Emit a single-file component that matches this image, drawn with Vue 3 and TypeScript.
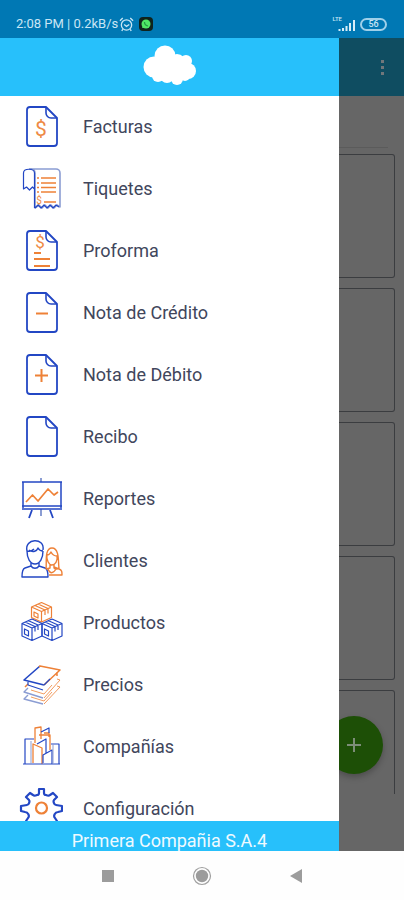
<script setup lang="ts">
type Tone = 'blue' | 'orange' | 'soft'

interface Stroke {
  d: string
  tone: Tone
  width?: number
}

interface Glyph {
  x: number
  y: number
  size: number
}

interface MenuItem {
  label: string
  strokes: Stroke[]
  dollar?: Glyph
}

const sheet: Stroke[] = [
  { d: 'M27 2H11a3 3 0 0 0-3 3v33a3 3 0 0 0 3 3h24a3 3 0 0 0 3-3V13z', tone: 'blue', width: 1.8 },
  { d: 'M27 2v6a5 5 0 0 0 5 5h6', tone: 'blue', width: 1.6 },
]

const items: MenuItem[] = [
  { label: 'Facturas', strokes: sheet, dollar: { x: 22, y: 31, size: 21 } },
  {
    label: 'Tiquetes',
    strokes: [
      { d: 'M10 2H37a4 4 0 0 1 4 4V40l-3-2-3 3-3-3-3 3-3-3-3 3-3-3-4 3V6a4 4 0 0 0-5-4', tone: 'soft', width: 1.6 },
      { d: 'M15.500 41V6c0-5-11-5-11 0v16l3-2 3 3 3-3 2 2M16 41l3-3 3 3 3-3 3 3 3-3 3 3 3-3 3 2', tone: 'blue', width: 1.2 },
      { d: 'M18 11h2M22 11h15M18 16h2M22 16h15M18 20.500h2M22 20.500h15M18 25h2M22 25h15M25 35h12', tone: 'orange', width: 1.4 },
    ],
    dollar: { x: 20, y: 37, size: 10 },
  },
  {
    label: 'Proforma',
    strokes: [...sheet, { d: 'M15 24h7M15 30h16M15 37h16', tone: 'orange', width: 2 }],
    dollar: { x: 21, y: 19, size: 17 },
  },
  { label: 'Nota de Crédito', strokes: [...sheet, { d: 'M17 22.500h12', tone: 'orange', width: 2 }] },
  { label: 'Nota de Débito', strokes: [...sheet, { d: 'M16 22.500h13M22.500 16v13', tone: 'orange', width: 2 }] },
  { label: 'Recibo', strokes: sheet },
  {
    label: 'Reportes',
    strokes: [
      { d: 'M22 1v4M22 32v7', tone: 'soft', width: 2 },
      { d: 'M3 5H43M4 5V31M42 5V31M3 29H43M3 32H43', tone: 'blue', width: 1.5 },
      { d: 'M13 33l-3 8M31 33l3 8', tone: 'blue', width: 1.8 },
      { d: 'M7 25l6.500-7 5.500 6L29 12l6 6 4-3', tone: 'orange', width: 1.7 },
    ],
  },
  {
    label: 'Clientes',
    strokes: [
      { d: 'M8 12c-3-13 18-14 16-1M8 12c0 7 3 13 8 13s8-6 8-13M8 12c3 1 5 0 7-2M10 11c4 3 8 1 9-2 1 2 3 3 5 3', tone: 'blue', width: 1.4 },
      { d: 'M12 24v3l-6 2c-3 1-3 5-3 9h26c0-4 0-8-3-9l-6-2v-3M12 27c2 3 6 3 8 0', tone: 'blue', width: 1.4 },
      { d: 'M27 30c1-5-2-21 6-21s6 16 7 20c-2 2-4 1-5 0v-3M28 15c-1 6 2 11 5 11s6-4 5-9c-3 0-5-2-6-4-1 2-2 3-4 3M31 26v3l-4 1M35 28l5 2c3 1 3 3 3 6H30M29 30c2 5 5 5 8 0', tone: 'orange', width: 1.4 },
    ],
  },
  {
    label: 'Productos',
    strokes: [
      { d: 'M22.500 1.500l10 4.500v10.500l-10 4.500-10-4.500V6zM12.500 6l10 4.500L32.500 6M22.500 10.500V21M16 4.500l10 4.500v5M19 3l10 4.500v5M15 11v4l4 2v-4z', tone: 'orange', width: 1.2 },
      { d: 'M13 18l10 4.500V35l-10 4.500L3 35V22.500zM3 22.500L13 27l10-4.500M13 27v12.500M6 21l10 4.500v5M9 19.500L19 24v5M5.500 28v5l4 2v-5z', tone: 'blue', width: 1.2 },
      { d: 'M33 18l10 4.500V35l-10 4.500L23 35V22.500L33 27l10-4.500M23 22.500L33 18M33 27v12.500M26 21l10 4.500v5M29 19.500L39 24v5M25.500 28v5l4 2v-5z', tone: 'blue', width: 1.2 },
    ],
  },
  {
    label: 'Precios',
    strokes: [
      { d: 'M9 25l-4 4 19 6M9 32l-4 4 19 5', tone: 'soft', width: 1.4 },
      { d: 'M38 16l3 1-16 18M38 23l3 1-16 17M12 27l13 4 8-9M12 34l13 4 8-9', tone: 'orange', width: 0.8 },
      { d: 'M21 3L5 17l20 5', tone: 'blue', width: 1.6 },
      { d: 'M20 4l1-1 20 4-16 15M6 24l3-3M38 9v4', tone: 'orange', width: 1.5 },
      { d: 'M25 22l6-6M9 19v3l15 5', tone: 'blue', width: 1.2 },
    ],
  },
  {
    label: 'Compañías',
    strokes: [
      { d: 'M16 18V3l6-1v12M25 8h5v4M20 10h11v15M14 38V19l9 4v16', tone: 'orange', width: 1.3 },
      { d: 'M4 39h37M6 39V14h9M40 39V19h-8M22 7l8-4v5M18 19l9-5v14M24 38V30l9-5v14', tone: 'blue', width: 1.2 },
      { d: 'M12 39V16M34 39V19', tone: 'soft', width: 1 },
    ],
  },
  {
    label: 'Configuración',
    strokes: [
      {
        d: 'M20 2h5v4c0 1 1 2 2 2 2 1 3 1 4 0l3-2 4 4-3 3c-1 1 0 5 2 5l6 1v5l-4 1c-3 0-5 4-3 6l2 3-4 4-3-2c-2-2-6 0-6 2v4h-5v-4c0-2-4-4-6-2l-3 2-4-4 2-3c2-2 0-6-3-6l-4-1v-5l6-1c2 0 3-4 2-5l-3-3 4-4 3 2c1 1 2 1 4 0 1 0 2-1 2-2z',
        tone: 'blue',
        width: 2.2,
      },
      { d: 'M28 21a5.500 5.500 0 1 1-11 0a5.500 5.500 0 1 1 11 0', tone: 'orange', width: 2.2 },
    ],
  },
]

const cards = [1, 2, 3, 4, 5]
</script>

<template>
  <div class="screen">
    <header class="status">
      <span class="clock">2:08 PM | 0.2kB/s</span>
      <svg class="alarm" viewBox="0 0 16 16" aria-hidden="true">
        <circle cx="8" cy="8.500" r="5.500" />
        <path d="M1 4l3-3M15 4l-3-3M5.500 8L8 10l3-2M4 13l-1 2M12 13l1 2" />
      </svg>
      <svg class="chat" viewBox="0 0 14 14" aria-hidden="true">
        <rect width="14" height="14" rx="4" fill="#10231c" />
        <circle cx="7" cy="7" r="4.500" fill="#50e666" />
        <path d="M3 11l1-3 2 2z" fill="#50e666" />
        <path d="M5.500 5c0 2 1.500 3.500 3.500 4" fill="none" stroke="#239a43" stroke-width="1.200" />
      </svg>
      <span class="spacer"></span>
      <span class="network">LTE</span>
      <svg class="signal" viewBox="0 0 18 12" aria-hidden="true">
        <path d="M1.500 12v-2M5 12V9M8.500 12V7M12 12V4M16 12V1" />
      </svg>
      <span class="battery">56</span>
    </header>

    <div class="body">
      <aside class="drawer">
        <div class="brand">
          <svg class="cloud" viewBox="0 0 54 40" aria-hidden="true">
            <g fill="#fff">
              <circle cx="22" cy="11" r="10.500" />
              <circle cx="11" cy="22" r="10.500" />
              <circle cx="43" cy="16" r="6" />
              <circle cx="45" cy="26" r="8" />
              <circle cx="34" cy="18" r="9" />
              <circle cx="15" cy="31" r="6" />
              <circle cx="24" cy="31" r="7" />
              <circle cx="34" cy="34" r="6" />
              <circle cx="42" cy="31" r="5" />
              <rect x="12" y="14" width="32" height="18" />
            </g>
          </svg>
        </div>
        <nav class="menu">
          <a v-for="item in items" :key="item.label" class="item" href="#">
            <svg class="icon" viewBox="0 0 44 44" aria-hidden="true">
              <path
                v-for="(s, i) in item.strokes"
                :key="i"
                :class="s.tone"
                :d="s.d"
                :stroke-width="s.width ?? 1.5"
              />
              <text
                v-if="item.dollar"
                class="dollar"
                :x="item.dollar.x"
                :y="item.dollar.y"
                :font-size="item.dollar.size"
                text-anchor="middle"
              >$</text>
            </svg>
            <span>{{ item.label }}</span>
          </a>
        </nav>
        <div class="company">Primera Compañia S.A.4</div>
      </aside>

      <main class="page">
        <div class="toolbar">
          <button class="more" type="button" aria-label="Más opciones">
            <i></i><i></i><i></i>
          </button>
        </div>
        <div class="divider"></div>
        <div class="cards">
          <div v-for="card in cards" :key="card" class="card"></div>
        </div>
        <button class="fab" type="button" aria-label="Agregar">
          <svg viewBox="0 0 16 16" aria-hidden="true"><path d="M8 1v14M1 8h14" /></svg>
        </button>
      </main>
    </div>

    <footer class="keys">
      <button type="button" aria-label="Recientes">
        <svg viewBox="0 0 20 20"><rect x="4" y="4" width="12" height="12" fill="#9c9c9c" /></svg>
      </button>
      <button type="button" aria-label="Inicio">
        <svg viewBox="0 0 20 20">
          <circle cx="10" cy="10" r="8.500" fill="none" stroke="#a0a0a0" stroke-width="1.200" />
          <circle cx="10" cy="10" r="6.200" fill="#9c9c9c" />
        </svg>
      </button>
      <button type="button" aria-label="Atrás">
        <svg viewBox="0 0 20 20"><path d="M4 10l12-7v14z" fill="#9c9c9c" /></svg>
      </button>
    </footer>
  </div>
</template>

<style>
body {
  background: #fefefe;
}
</style>

<style scoped>
.screen {
  display: flex;
  flex-direction: column;
  height: 100vh;
  overflow: hidden;
  font-family: Roboto, 'Liberation Sans', sans-serif;
}

button {
  padding: 0;
  border: 0;
  background: none;
  cursor: pointer;
}

.status {
  display: flex;
  flex: none;
  align-items: center;
  height: 28px;
  padding: 10px 17px 0 16px;
  background: #0078b4;
  color: #c9e6f5;
}

.clock {
  font-size: 13px;
  line-height: 16px;
}

.alarm {
  width: 15px;
  height: 15px;
  margin-left: 1px;
  fill: none;
  stroke: #c9e6f5;
  stroke-width: 1.4;
}

.chat {
  width: 14px;
  height: 14px;
  margin-left: 5px;
}

.spacer {
  flex: 1;
}

.network {
  align-self: flex-start;
  margin-top: 5px;
  font-size: 6px;
  font-weight: 500;
  line-height: 8px;
}

.signal {
  width: 18px;
  height: 12px;
  margin: 1px 4px 0 -4px;
  stroke: #d7edf8;
  stroke-width: 2;
}

.battery {
  box-sizing: border-box;
  width: 27px;
  height: 13px;
  border: 2px solid #9fd0e9;
  border-radius: 7px;
  font-size: 9px;
  font-weight: 500;
  line-height: 9px;
  text-align: center;
}

.body {
  display: grid;
  flex: 1;
  grid-template-columns: minmax(0, 1fr) 65px;
  grid-template-rows: minmax(0, 1fr);
  min-height: 0;
}

.drawer {
  display: flex;
  flex-direction: column;
  min-height: 0;
  background: #fff;
}

.brand {
  display: flex;
  flex: none;
  align-items: center;
  justify-content: center;
  height: 54px;
  padding-bottom: 4px;
  background: #27c0fb;
}

.cloud {
  width: 54px;
  height: 40px;
}

.menu {
  flex: 1;
  min-height: 0;
  overflow: hidden;
}

.item {
  display: flex;
  align-items: center;
  gap: 20px;
  height: 62px;
  padding-left: 19px;
  color: #41465c;
  font-size: 18px;
  line-height: 24px;
  text-decoration: none;
}

.icon {
  flex: none;
  width: 44px;
  height: 44px;
  fill: none;
  stroke-linejoin: round;
}

.blue {
  stroke: #2347c4;
}

.orange {
  stroke: #ee8137;
}

.soft {
  stroke: #8b9dd3;
}

.dollar {
  fill: #ee8a45;
}

.company {
  flex: none;
  height: 30px;
  padding-top: 8px;
  box-sizing: border-box;
  overflow: hidden;
  background: #27c0fb;
  color: #effaff;
  font-size: 18px;
  line-height: 24px;
  text-align: center;
}

.page {
  position: relative;
  display: flex;
  flex-direction: column;
  min-height: 0;
  overflow: hidden;
  background: #666;
}

.toolbar {
  display: flex;
  flex: none;
  align-items: center;
  justify-content: flex-end;
  height: 58px;
  padding-right: 16px;
  background: #0f4d61;
}

.more {
  display: flex;
  flex-direction: column;
  align-items: center;
  gap: 3px;
  width: 12px;
}

.more i {
  width: 3px;
  height: 3px;
  background: #71777b;
}

.divider {
  flex: none;
  height: 1px;
  margin: 51px 16px 6px 0;
  background: #5b5b5b;
}

.cards {
  display: flex;
  flex: 1;
  flex-direction: column;
  gap: 10px;
  min-height: 0;
  margin-bottom: 57px;
  overflow: hidden;
}

.card {
  box-sizing: border-box;
  flex: none;
  height: 124px;
  margin-right: 9px;
  border: 1px solid #3b3d40;
  border-left: 0;
  border-radius: 0 3px 3px 0;
}

.fab {
  position: absolute;
  right: 21px;
  bottom: 77px;
  display: flex;
  align-items: center;
  justify-content: center;
  width: 58px;
  height: 58px;
  border-radius: 50%;
  background: #1d4f06;
  box-shadow: 0 3px 6px rgba(0, 0, 0, 0.25);
}

.fab svg {
  width: 16px;
  height: 16px;
  stroke: #7d8d78;
  stroke-width: 2;
}

.keys {
  display: flex;
  flex: none;
  align-items: center;
  justify-content: center;
  gap: 74px;
  height: 49px;
  background: #fefefe;
}

.keys button,
.keys svg {
  display: block;
  width: 20px;
  height: 20px;
}
</style>
